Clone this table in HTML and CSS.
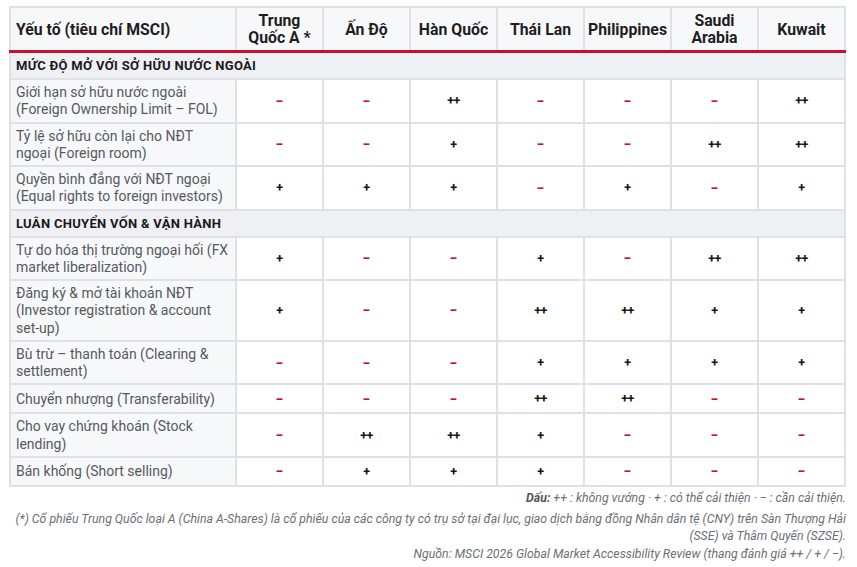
FILE: index.html
```html
<!DOCTYPE html>
<html lang="vi">
<head>
<meta charset="utf-8">
<link rel="stylesheet" href="styles.css">
</head>
<body>
<div class="wrap">
<table class="grid">
<colgroup><col class="c-first"><col><col><col><col><col><col><col></colgroup>
<thead>
<tr>
<th class="h-first">Yếu tố (tiêu chí MSCI)</th>
<th>Trung<br>Quốc A *</th>
<th>Ấn Độ</th>
<th>Hàn Quốc</th>
<th>Thái Lan</th>
<th>Philippines</th>
<th>Saudi<br>Arabia</th>
<th>Kuwait</th>
</tr>
</thead>
<tbody>
<tr class="sec"><td colspan="8">MỨC ĐỘ MỞ VỚI SỞ HỮU NƯỚC NGOÀI</td></tr>
<tr><td class="lbl">Giới hạn sở hữu nước ngoài (Foreign Ownership Limit – FOL)</td><td class="m">−</td><td class="m">−</td><td class="p">++</td><td class="m">−</td><td class="m">−</td><td class="m">−</td><td class="p">++</td></tr>
<tr><td class="lbl">Tỷ lệ sở hữu còn lại cho NĐT ngoại (Foreign room)</td><td class="m">−</td><td class="m">−</td><td class="p">+</td><td class="m">−</td><td class="m">−</td><td class="p">++</td><td class="p">++</td></tr>
<tr><td class="lbl">Quyền bình đẳng với NĐT ngoại (Equal rights to foreign investors)</td><td class="p">+</td><td class="p">+</td><td class="p">+</td><td class="m">−</td><td class="p">+</td><td class="m">−</td><td class="p">+</td></tr>
<tr class="sec"><td colspan="8">LUÂN CHUYỂN VỐN &amp; VẬN HÀNH</td></tr>
<tr><td class="lbl">Tự do hóa thị trường ngoại hối (FX market liberalization)</td><td class="p">+</td><td class="m">−</td><td class="m">−</td><td class="p">+</td><td class="m">−</td><td class="p">++</td><td class="p">++</td></tr>
<tr><td class="lbl">Đăng ký &amp; mở tài khoản NĐT (Investor registration &amp; account set-up)</td><td class="p">+</td><td class="m">−</td><td class="m">−</td><td class="p">++</td><td class="p">++</td><td class="p">+</td><td class="p">+</td></tr>
<tr><td class="lbl">Bù trừ – thanh toán (Clearing &amp; settlement)</td><td class="m">−</td><td class="m">−</td><td class="m">−</td><td class="p">+</td><td class="p">+</td><td class="p">+</td><td class="p">+</td></tr>
<tr><td class="lbl">Chuyển nhượng (Transferability)</td><td class="m">−</td><td class="m">−</td><td class="m">−</td><td class="p">++</td><td class="p">++</td><td class="m">−</td><td class="m">−</td></tr>
<tr><td class="lbl">Cho vay chứng khoán (Stock lending)</td><td class="m">−</td><td class="p">++</td><td class="p">++</td><td class="p">+</td><td class="m">−</td><td class="m">−</td><td class="m">−</td></tr>
<tr><td class="lbl">Bán khống (Short selling)</td><td class="m">−</td><td class="p">+</td><td class="p">+</td><td class="p">+</td><td class="m">−</td><td class="m">−</td><td class="m">−</td></tr>
</tbody>
</table>
<div class="notes">
<p class="legend"><b>Dấu:</b> ++ : không vướng · + : có thể cải thiện · − : cần cải thiện.</p>
<p class="star">(*) Cổ phiếu Trung Quốc loại A (China A-Shares) là cổ phiếu của các công ty có trụ sở tại đại lục, giao dịch bằng đồng Nhân dân tệ (CNY) trên Sàn Thượng Hải (SSE) và Thâm Quyến (SZSE).</p>
<p class="src">Nguồn: MSCI 2026 Global Market Accessibility Review (thang đánh giá ++ / + / −).</p>
</div>
</div>
</body>
</html>
```

FILE: styles.css
```css
html, body {
  margin: 0;
  padding: 0;
  background: #ffffff;
}
body {
  font-family: Roboto, "Liberation Sans", sans-serif;
  color: #333;
}
.wrap {
  padding: 6px 11px 0 9px;
}
.grid {
  width: 100%;
  border-collapse: collapse;
  table-layout: fixed;
  border: 2px solid #dfe1e6;
}
.c-first { width: 226px; }
.grid th, .grid td {
  border: 2px solid #dfe1e6;
}
.grid th {
  font-weight: 700;
  font-size: 15.8px;
  line-height: 17px;
  color: #1e1e1e;
  text-align: center;
  padding: 4px 2px;
  height: 33px;
  background: #f7f8fa;
  border-bottom: 3px solid #c8102e;
}
.grid th.h-first {
  text-align: left;
  padding-left: 5px;
}
.sec td {
  background: #eef0f3;
  font-weight: 700;
  font-size: 13px;
  letter-spacing: 0.3px;
  color: #1a1a1a;
  padding: 4px 5px 3px;
  height: 18px;
  line-height: 18px;
}
.lbl {
  background: #f7f8fa;
  font-size: 14px;
  line-height: 17.25px;
  color: #555a60;
  padding: 4px 5px 3px;
  height: 20px;
}
td.m, td.p {
  text-align: center;
  font-weight: 700;
  background: #fff;
}
td.m {
  color: #c8102e;
  font-size: 14px;
}
td.p {
  color: #151515;
  font-size: 12.5px;
  letter-spacing: -0.5px;
}
.notes {
  text-align: right;
  font-style: italic;
  font-size: 12.3px;
  line-height: 17px;
  color: #6b6f75;
}
.notes p {
  margin: 0;
}
.notes .legend {
  margin-top: 3px;
}
.notes .legend b {
  font-weight: 700;
  color: #555;
}
.notes .star {
  margin-top: 4px;
}
.notes .src {
  margin-top: 1px;
}
```
